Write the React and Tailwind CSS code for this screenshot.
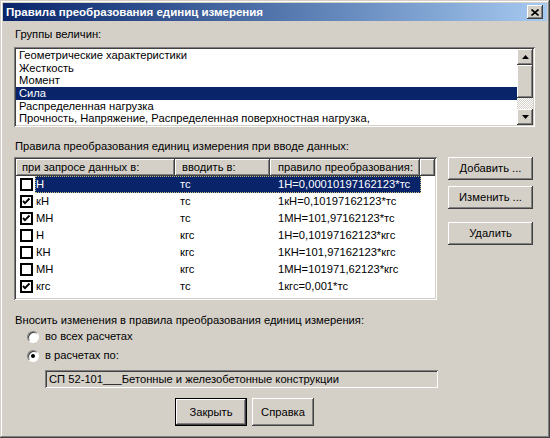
import React from "react";

const raised =
  "bg-[#d4d0c8] shadow-[inset_-1px_-1px_#404040,inset_1px_1px_#ffffff,inset_-2px_-2px_#808080,inset_2px_2px_#d4d0c8]";
const sunken =
  "shadow-[inset_1px_1px_#808080,inset_-1px_-1px_#ffffff,inset_2px_2px_#404040,inset_-2px_-2px_#d4d0c8]";

const groups = [
  "Геометрические характеристики",
  "Жесткость",
  "Момент",
  "Сила",
  "Распределенная нагрузка",
  "Прочность, Напряжение, Распределенная поверхностная нагрузка,",
];

const rules = [
  { on: false, from: "Н", to: "тс", rule: "1Н=0,00010197162123*тс", sel: true },
  { on: true, from: "кН", to: "тс", rule: "1кН=0,10197162123*тс" },
  { on: true, from: "МН", to: "тс", rule: "1МН=101,97162123*тс" },
  { on: false, from: "Н", to: "кгс", rule: "1Н=0,10197162123*кгс" },
  { on: false, from: "КН", to: "кгс", rule: "1КН=101,97162123*кгс" },
  { on: false, from: "МН", to: "кгс", rule: "1МН=101971,62123*кгс" },
  { on: true, from: "кгс", to: "тс", rule: "1кгс=0,001*тс" },
];

function Arrow({ down }) {
  return (
    <svg width="7" height="4" viewBox="0 0 7 4">
      <path d={down ? "M0 0h7L3.5 4z" : "M0 4h7L3.5 0z"} fill="#000" />
    </svg>
  );
}

function Check({ on }) {
  return (
    <div className="w-[13px] h-[13px] border-2 border-black bg-white flex items-center justify-center">
      {on && (
        <svg width="9" height="9" viewBox="0 0 9 9">
          <path d="M1 4l2 2.2L7.5 1.5" stroke="#000" strokeWidth="1.9" fill="none" />
        </svg>
      )}
    </div>
  );
}

function Radio({ on, label }) {
  return (
    <div className="h-[19px] flex items-center pl-[13px]">
      <div className="w-[12px] h-[12px] rounded-full bg-white border border-t-[#808080] border-l-[#808080] border-b-white border-r-white flex items-center justify-center shadow-[inset_1px_1px_#404040]">
        {on && <div className="w-[4px] h-[4px] rounded-full bg-black" />}
      </div>
      <span className="ml-[6px]">{label}</span>
    </div>
  );
}

function Button({ children, className = "", def }) {
  return (
    <div className={`${def ? "border border-black" : ""} ${className}`}>
      <div className={`${raised} w-full h-full flex items-center justify-center`}>
        {children}
      </div>
    </div>
  );
}

export default function App() {
  return (
    <div className="w-[550px] h-[438px] bg-[#d4d0c8] p-[3px] text-[11.2px] leading-[13px] text-black font-['Liberation_Sans',Arial,sans-serif] shadow-[inset_-1px_-1px_#404040,inset_1px_1px_#d4d0c8,inset_-2px_-2px_#808080,inset_2px_2px_#ffffff]">
      {/* title bar */}
      <div className="h-[18px] flex items-center justify-between pl-[3px] pr-[4px] bg-gradient-to-r from-[#0a246a] to-[#a6caf0]">
        <span className="text-white font-bold text-[11.5px]">Правила преобразования единиц измерения</span>
        <div className={`${raised} w-[16px] h-[14px] flex items-center justify-center`}>
          <svg width="8" height="7" viewBox="0 0 8 7">
            <path d="M0.5 0.5l7 6M7.5 0.5l-7 6" stroke="#000" strokeWidth="1.6" />
          </svg>
        </div>
      </div>

      <div className="px-[11px]">
        <div className="mt-[7px] ml-[1px]">Группы величин:</div>

        {/* listbox */}
        <div className={`${sunken} bg-white mt-[6px] w-[521px] h-[80px] p-[2px] flex`}>
          <div className="flex-1 flex flex-col">
            {groups.map((g, i) => (
              <div
                key={g}
                className={`h-[13px] pl-[3px] whitespace-nowrap overflow-hidden ${
                  i === 3 ? "bg-[#0a246a] text-white" : ""
                }`}
              >
                {g}
              </div>
            ))}
          </div>
          <div className="w-[16px] flex flex-col">
            <div className={`${raised} h-[16px] flex items-center justify-center`}>
              <Arrow />
            </div>
            <div className={`${raised} h-[34px]`} />
            <div className="h-[12px] bg-[repeating-conic-gradient(#ffffff_0_25%,#d4d0c8_0_50%)] bg-[length:2px_2px]" />
            <div className={`${raised} h-[16px] flex items-center justify-center`}>
              <Arrow down />
            </div>
          </div>
        </div>

        <div className="mt-[13px] ml-[1px]">Правила преобразования единиц измерения при вводе данных:</div>

        <div className="mt-[4px] flex">
          {/* list view */}
          <div className={`${sunken} bg-white w-[423px] h-[143px] p-[2px]`}>
            <div className="flex h-[17px]">
              <div className={`${raised} w-[159px] pl-[6px] flex items-center`}>при запросе данных в:</div>
              <div className={`${raised} w-[95px] pl-[7px] flex items-center`}>вводить в:</div>
              <div className={`${raised} w-[150px] pl-[8px] flex items-center`}>правило преобразования:</div>
              <div className={`${raised} flex-1`} />
            </div>
            {rules.map((r, i) => (
              <div key={i} className="flex h-[17px] items-center">
                <div className="w-[19px] pl-[4px] flex items-center">
                  <Check on={r.on} />
                </div>
                <div
                  className={`flex w-[386px] h-full items-center ${
                    r.sel ? "bg-[#0a246a] text-white outline outline-1 outline-dotted outline-offset-[-1px] outline-[#c8c080]" : ""
                  }`}
                >
                  <span className="w-[140px] pl-[1px]">{r.from}</span>
                  <span className="w-[95px] pl-[5px]">{r.to}</span>
                  <span className="flex-1 pl-[8px]">{r.rule}</span>
                </div>
              </div>
            ))}
          </div>

          <div className="ml-[11px] w-[85px] flex flex-col">
            <Button className="h-[23px]">Добавить ...</Button>
            <Button className="h-[23px] mt-[6px]">Изменить ...</Button>
            <Button className="h-[23px] mt-[13px]">Удалить</Button>
          </div>
        </div>

        <div className="mt-[14px] ml-[1px]">Вносить изменения в правила преобразования единиц измерения:</div>
        <Radio label="во всех расчетах" />
        <Radio on label="в расчетах по:" />

        <div className={`${sunken} bg-[#d4d0c8] mt-[5px] ml-[31px] w-[393px] h-[18px] flex items-center pl-[4px] whitespace-nowrap`}>
          СП 52-101___Бетонные и железобетонные конструкции
        </div>

        <div className="mt-[10px] flex ml-[161px]">
          <Button def className="w-[72px] h-[28px]">Закрыть</Button>
          <Button className="w-[62px] h-[28px] ml-[5px]">Справка</Button>
        </div>
      </div>
    </div>
  );
}
